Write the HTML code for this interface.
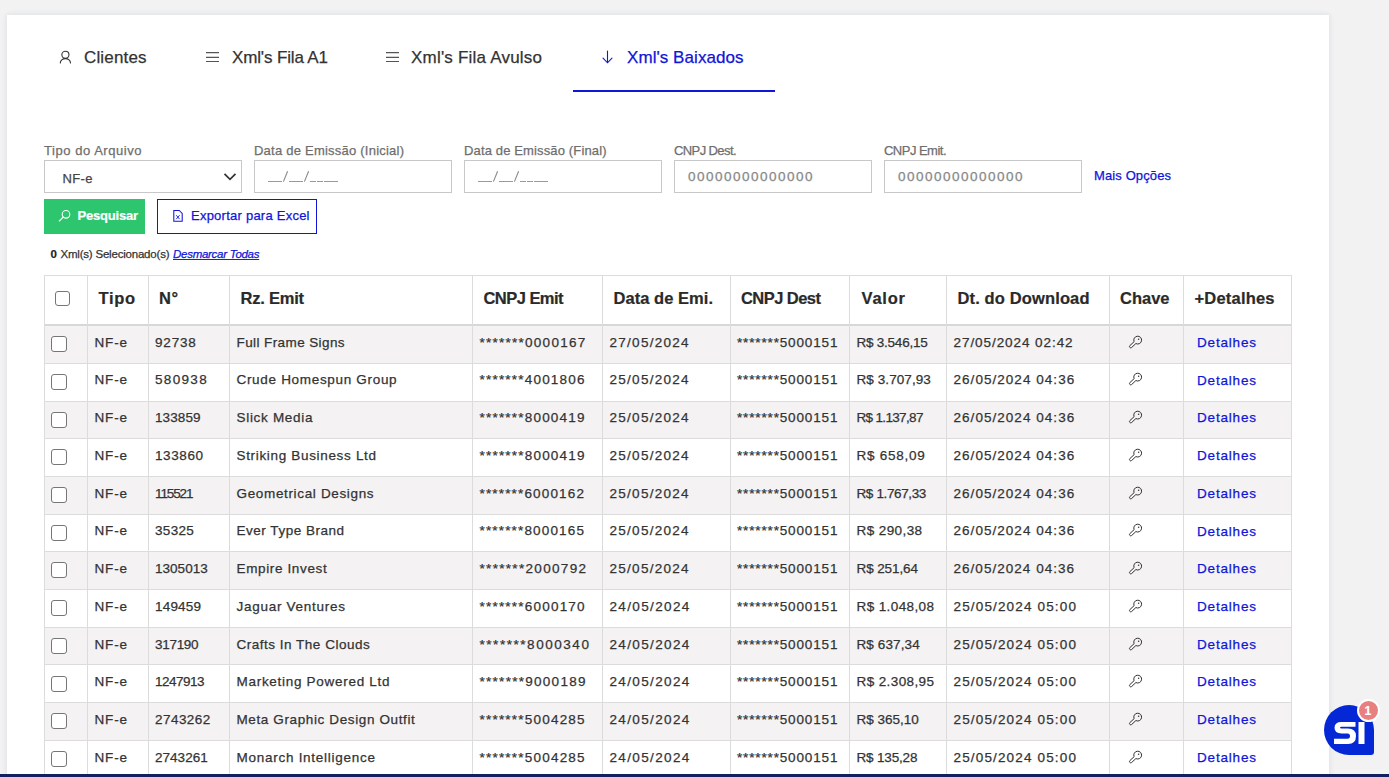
<!DOCTYPE html>
<html><head><meta charset="utf-8">
<style>
*{margin:0;padding:0;box-sizing:border-box}
html,body{width:1389px;height:777px;overflow:hidden;background:#f2f2f3;font-family:"Liberation Sans",sans-serif;color:#333}
.t,.a{position:absolute;white-space:nowrap}
.t{-webkit-text-stroke:0.25px currentColor}
.b{-webkit-text-stroke:0.2px currentColor}
</style></head><body>

<div class="a" style="left:7px;top:15px;width:1322px;height:770px;background:#fff;box-shadow:0 0 6px rgba(40,50,70,.11)"></div>
<svg class="a" style="left:59px;top:50px" width="14" height="14" viewBox="0 0 14 14"><circle cx="6.4" cy="4.8" r="3.55" fill="none" stroke="#333" stroke-width="1.1"/><path d="M1.3 13 A5.1 4.4 0 0 1 11.5 13" fill="none" stroke="#333" stroke-width="1.1" stroke-linecap="round"/></svg>
<div class="t" style="left:84.00px;top:48.33px;font-size:17.00px;line-height:19.55px;color:#333;letter-spacing:0.154px">Clientes</div>
<svg class="a" style="left:206px;top:50px" width="14" height="14" viewBox="0 0 14 14"><path d="M0 2.6H13M0 7.4H13M0 11.5H13" stroke="#555" stroke-width="1.1"/></svg>
<svg class="a" style="left:386px;top:50px" width="14" height="14" viewBox="0 0 14 14"><path d="M0 2.6H13M0 7.4H13M0 11.5H13" stroke="#555" stroke-width="1.1"/></svg>
<div class="t" style="left:232.00px;top:48.33px;font-size:17.00px;line-height:19.55px;color:#333;letter-spacing:-0.143px">Xml&#x27;s Fila A1</div>
<div class="t" style="left:411.00px;top:48.33px;font-size:17.00px;line-height:19.55px;color:#333;letter-spacing:0.210px">Xml&#x27;s Fila Avulso</div>
<svg class="a" style="left:600px;top:50px" width="15" height="14" viewBox="0 0 15 14"><path d="M7.5 1V12.8M3 8.2L7.5 12.8L12 8.2" fill="none" stroke="#1015d8" stroke-width="1.1" stroke-linecap="round"/></svg>
<div class="t" style="left:627.00px;top:48.33px;font-size:17.00px;line-height:19.55px;color:#1015d8;letter-spacing:0.063px">Xml&#x27;s Baixados</div>
<div class="a" style="left:573px;top:90px;width:202px;height:2px;background:#1015d8"></div>
<div class="t" style="left:44.00px;top:143.82px;font-size:13.00px;line-height:14.95px;color:#6e6e6e;letter-spacing:0.546px">Tipo do Arquivo</div>
<div class="t" style="left:254.00px;top:143.82px;font-size:13.00px;line-height:14.95px;color:#6e6e6e;letter-spacing:0.229px">Data de Emissão (Inicial)</div>
<div class="t" style="left:464.00px;top:143.82px;font-size:13.00px;line-height:14.95px;color:#6e6e6e;letter-spacing:0.139px">Data de Emissão (Final)</div>
<div class="t" style="left:674.00px;top:143.82px;font-size:13.00px;line-height:14.95px;color:#6e6e6e;letter-spacing:-0.600px">CNPJ Dest.</div>
<div class="t" style="left:884.00px;top:143.82px;font-size:13.00px;line-height:14.95px;color:#6e6e6e;letter-spacing:-0.519px">CNPJ Emit.</div>
<div class="a" style="left:44px;top:160px;width:198px;height:33px;border:1px solid #c8c8c8;background:#fff"></div>
<div class="a" style="left:254px;top:160px;width:198px;height:33px;border:1px solid #c8c8c8;background:#fff"></div>
<div class="a" style="left:464px;top:160px;width:198px;height:33px;border:1px solid #c8c8c8;background:#fff"></div>
<div class="a" style="left:674px;top:160px;width:198px;height:33px;border:1px solid #c8c8c8;background:#fff"></div>
<div class="a" style="left:884px;top:160px;width:198px;height:33px;border:1px solid #c8c8c8;background:#fff"></div>
<div class="t" style="left:62.50px;top:172.02px;font-size:13.00px;line-height:14.95px;color:#444;letter-spacing:0.370px">NF-e</div>
<svg class="a" style="left:223px;top:172px" width="14" height="10" viewBox="0 0 14 10"><path d="M1.5 1.8L7 7.3L12.5 1.8" fill="none" stroke="#333" stroke-width="1.7"/></svg>
<div class="a" style="left:268.1px;top:181px;width:6.6px;height:1.1px;background:#9a9a9a"></div>
<div class="a" style="left:275.2px;top:181px;width:6.6px;height:1.1px;background:#9a9a9a"></div>
<div class="a" style="left:289.0px;top:181px;width:6.6px;height:1.1px;background:#9a9a9a"></div>
<div class="a" style="left:296.2px;top:181px;width:6.6px;height:1.1px;background:#9a9a9a"></div>
<div class="a" style="left:309.5px;top:181px;width:6.6px;height:1.1px;background:#9a9a9a"></div>
<div class="a" style="left:316.8px;top:181px;width:6.6px;height:1.1px;background:#9a9a9a"></div>
<div class="a" style="left:324.1px;top:181px;width:6.6px;height:1.1px;background:#9a9a9a"></div>
<div class="a" style="left:331.4px;top:181px;width:6.6px;height:1.1px;background:#9a9a9a"></div>
<svg class="a" style="left:254px;top:170px" width="60" height="13" viewBox="0 0 60 13"><path d="M33.6 1.2L29.4 11.6M54.6 1.2L50.4 11.6" stroke="#8a8a8a" stroke-width="1.1"/></svg>
<div class="a" style="left:478.1px;top:181px;width:6.6px;height:1.1px;background:#9a9a9a"></div>
<div class="a" style="left:485.2px;top:181px;width:6.6px;height:1.1px;background:#9a9a9a"></div>
<div class="a" style="left:499.0px;top:181px;width:6.6px;height:1.1px;background:#9a9a9a"></div>
<div class="a" style="left:506.2px;top:181px;width:6.6px;height:1.1px;background:#9a9a9a"></div>
<div class="a" style="left:519.5px;top:181px;width:6.6px;height:1.1px;background:#9a9a9a"></div>
<div class="a" style="left:526.8px;top:181px;width:6.6px;height:1.1px;background:#9a9a9a"></div>
<div class="a" style="left:534.1px;top:181px;width:6.6px;height:1.1px;background:#9a9a9a"></div>
<div class="a" style="left:541.4px;top:181px;width:6.6px;height:1.1px;background:#9a9a9a"></div>
<svg class="a" style="left:464px;top:170px" width="60" height="13" viewBox="0 0 60 13"><path d="M33.6 1.2L29.4 11.6M54.6 1.2L50.4 11.6" stroke="#8a8a8a" stroke-width="1.1"/></svg>
<div class="t" style="left:688.00px;top:169.36px;font-size:13.50px;line-height:15.52px;color:#888;letter-spacing:1.491px">00000000000000</div>
<div class="t" style="left:898.00px;top:169.36px;font-size:13.50px;line-height:15.52px;color:#888;letter-spacing:1.491px">00000000000000</div>
<div class="t" style="left:1094.00px;top:168.62px;font-size:13.00px;line-height:14.95px;color:#1015d8;letter-spacing:0.114px">Mais Opções</div>
<div class="a" style="left:44px;top:199px;width:101px;height:35px;background:#2dc56d"></div>
<svg class="a" style="left:58px;top:209px" width="14" height="14" viewBox="0 0 14 14"><circle cx="8" cy="5.3" r="3.8" fill="none" stroke="#fff" stroke-width="1.1"/><path d="M5.3 8L1.3 12" stroke="#fff" stroke-width="1.1" stroke-linecap="round"/></svg>
<div class="t b" style="left:77.50px;top:209.22px;font-size:13.00px;line-height:14.95px;color:#fff;font-weight:bold;letter-spacing:-0.206px">Pesquisar</div>
<div class="a" style="left:157px;top:199px;width:160px;height:35px;border:1.5px solid #1015d8"></div>
<svg class="a" style="left:172px;top:209px" width="12" height="14" viewBox="0 0 12 14"><path d="M1.8 1.5H7.2L10.2 4.5V12.3H1.8Z" fill="none" stroke="#1015d8" stroke-width="1.05"/><path d="M4.2 6.2L7.6 10.2M7.6 6.2L4.2 10.2" stroke="#1015d8" stroke-width="0.9"/></svg>
<div class="t" style="left:191.00px;top:209.42px;font-size:13.00px;line-height:14.95px;color:#1015d8;letter-spacing:0.241px">Exportar para Excel</div>
<div class="t b" style="left:50.50px;top:247.80px;font-size:11.50px;line-height:13.22px;color:#222;font-weight:bold">0</div>
<div class="t" style="left:60.50px;top:247.80px;font-size:11.50px;line-height:13.22px;color:#333;letter-spacing:-0.206px">Xml(s) Selecionado(s)</div>
<div class="t" style="left:173.00px;top:247.80px;font-size:11.50px;line-height:13.22px;color:#1015d8;font-style:italic;letter-spacing:-0.274px;text-decoration:underline;text-decoration-color:#333">Desmarcar Todas</div>
<div class="a" style="left:44px;top:326px;width:1248px;height:37px;background:#f4f2f3"></div>
<div class="a" style="left:44px;top:401px;width:1248px;height:37px;background:#f4f2f3"></div>
<div class="a" style="left:44px;top:476px;width:1248px;height:38px;background:#f4f2f3"></div>
<div class="a" style="left:44px;top:551px;width:1248px;height:38px;background:#f4f2f3"></div>
<div class="a" style="left:44px;top:627px;width:1248px;height:37px;background:#f4f2f3"></div>
<div class="a" style="left:44px;top:702px;width:1248px;height:38px;background:#f4f2f3"></div>
<div class="a" style="left:44px;top:275px;width:1248px;height:1px;background:#dcdcdc"></div>
<div class="a" style="left:44px;top:324px;width:1248px;height:2px;background:#d8d8d8"></div>
<div class="a" style="left:44px;top:363px;width:1248px;height:1px;background:#dcdcdc"></div>
<div class="a" style="left:44px;top:401px;width:1248px;height:1px;background:#dcdcdc"></div>
<div class="a" style="left:44px;top:438px;width:1248px;height:1px;background:#dcdcdc"></div>
<div class="a" style="left:44px;top:476px;width:1248px;height:1px;background:#dcdcdc"></div>
<div class="a" style="left:44px;top:514px;width:1248px;height:1px;background:#dcdcdc"></div>
<div class="a" style="left:44px;top:551px;width:1248px;height:1px;background:#dcdcdc"></div>
<div class="a" style="left:44px;top:589px;width:1248px;height:1px;background:#dcdcdc"></div>
<div class="a" style="left:44px;top:627px;width:1248px;height:1px;background:#dcdcdc"></div>
<div class="a" style="left:44px;top:664px;width:1248px;height:1px;background:#dcdcdc"></div>
<div class="a" style="left:44px;top:702px;width:1248px;height:1px;background:#dcdcdc"></div>
<div class="a" style="left:44px;top:740px;width:1248px;height:1px;background:#dcdcdc"></div>
<div class="a" style="left:44px;top:777px;width:1248px;height:1px;background:#dcdcdc"></div>
<div class="a" style="left:44px;top:275px;width:1px;height:502px;background:#dcdcdc"></div>
<div class="a" style="left:87px;top:275px;width:1px;height:502px;background:#dcdcdc"></div>
<div class="a" style="left:148px;top:275px;width:1px;height:502px;background:#dcdcdc"></div>
<div class="a" style="left:229px;top:275px;width:1px;height:502px;background:#dcdcdc"></div>
<div class="a" style="left:472px;top:275px;width:1px;height:502px;background:#dcdcdc"></div>
<div class="a" style="left:602px;top:275px;width:1px;height:502px;background:#dcdcdc"></div>
<div class="a" style="left:730px;top:275px;width:1px;height:502px;background:#dcdcdc"></div>
<div class="a" style="left:849px;top:275px;width:1px;height:502px;background:#dcdcdc"></div>
<div class="a" style="left:946px;top:275px;width:1px;height:502px;background:#dcdcdc"></div>
<div class="a" style="left:1109px;top:275px;width:1px;height:502px;background:#dcdcdc"></div>
<div class="a" style="left:1183px;top:275px;width:1px;height:502px;background:#dcdcdc"></div>
<div class="a" style="left:1291px;top:275px;width:1px;height:502px;background:#dcdcdc"></div>
<div class="a" style="left:55px;top:291px;width:15px;height:15px;border:1.5px solid #767676;border-radius:3px;background:#fff"></div>
<div class="t b" style="left:98.50px;top:288.89px;font-size:16.50px;line-height:18.97px;color:#2a2a2a;font-weight:bold;letter-spacing:0.659px">Tipo</div>
<div class="t b" style="left:159.00px;top:288.89px;font-size:16.50px;line-height:18.97px;color:#2a2a2a;font-weight:bold;letter-spacing:0.485px">N°</div>
<div class="t b" style="left:240.50px;top:288.89px;font-size:16.50px;line-height:18.97px;color:#2a2a2a;font-weight:bold;letter-spacing:-0.227px">Rz. Emit</div>
<div class="t b" style="left:483.50px;top:288.89px;font-size:16.50px;line-height:18.97px;color:#2a2a2a;font-weight:bold;letter-spacing:-0.544px">CNPJ Emit</div>
<div class="t b" style="left:613.50px;top:288.89px;font-size:16.50px;line-height:18.97px;color:#2a2a2a;font-weight:bold;letter-spacing:0.042px">Data de Emi.</div>
<div class="t b" style="left:741.00px;top:288.89px;font-size:16.50px;line-height:18.97px;color:#2a2a2a;font-weight:bold;letter-spacing:-0.545px">CNPJ Dest</div>
<div class="t b" style="left:861.50px;top:288.89px;font-size:16.50px;line-height:18.97px;color:#2a2a2a;font-weight:bold;letter-spacing:0.786px">Valor</div>
<div class="t b" style="left:957.50px;top:288.89px;font-size:16.50px;line-height:18.97px;color:#2a2a2a;font-weight:bold;letter-spacing:0.132px">Dt. do Download</div>
<div class="t b" style="left:1120.00px;top:288.89px;font-size:16.50px;line-height:18.97px;color:#2a2a2a;font-weight:bold">Chave</div>
<div class="t b" style="left:1194.50px;top:288.89px;font-size:16.50px;line-height:18.97px;color:#2a2a2a;font-weight:bold;letter-spacing:0.198px">+Detalhes</div>
<div class="a" style="left:51px;top:336.0px;width:16px;height:16px;border:1.5px solid #767676;border-radius:3px;background:#fff"></div>
<div class="t" style="left:94.50px;top:334.76px;font-size:13.50px;line-height:15.52px;color:#333;letter-spacing:0.833px">NF-e</div>
<div class="t" style="left:155.00px;top:334.76px;font-size:13.50px;line-height:15.52px;color:#333;letter-spacing:0.815px">92738</div>
<div class="t" style="left:236.50px;top:334.76px;font-size:13.50px;line-height:15.52px;color:#333;letter-spacing:0.405px">Full Frame Signs</div>
<div class="t" style="left:479.50px;top:334.76px;font-size:13.50px;line-height:15.52px;color:#333;letter-spacing:1.259px">*******0000167</div>
<div class="t" style="left:609.50px;top:334.76px;font-size:13.50px;line-height:15.52px;color:#333;letter-spacing:1.281px">27/05/2024</div>
<div class="t" style="left:737.00px;top:334.76px;font-size:13.50px;line-height:15.52px;color:#333;letter-spacing:0.851px">*******5000151</div>
<div class="t" style="left:856.50px;top:334.76px;font-size:13.50px;line-height:15.52px;color:#333;letter-spacing:-0.236px">R$ 3.546,15</div>
<div class="t" style="left:953.50px;top:334.76px;font-size:13.50px;line-height:15.52px;color:#333;letter-spacing:0.933px">27/05/2024 02:42</div>
<svg class="a" style="left:1128px;top:334.7px" width="16" height="16" viewBox="0 0 16 16"><path d="M6.12 6.65A3.9 3.9 0 1 1 7.88 8.55L3.58 12.55A1.3 1.3 0 0 1 1.82 10.65Z" fill="none" stroke="#333" stroke-width="1"/><circle cx="10.6" cy="4.3" r="0.75" fill="#333"/></svg>
<div class="t" style="left:1197.00px;top:334.86px;font-size:13.50px;line-height:15.52px;color:#1015d8;letter-spacing:0.817px">Detalhes</div>
<div class="a" style="left:51px;top:373.7px;width:16px;height:16px;border:1.5px solid #767676;border-radius:3px;background:#fff"></div>
<div class="t" style="left:94.50px;top:372.49px;font-size:13.50px;line-height:15.52px;color:#333;letter-spacing:0.833px">NF-e</div>
<div class="t" style="left:155.00px;top:372.49px;font-size:13.50px;line-height:15.52px;color:#333;letter-spacing:1.330px">580938</div>
<div class="t" style="left:236.50px;top:372.49px;font-size:13.50px;line-height:15.52px;color:#333;letter-spacing:0.685px">Crude Homespun Group</div>
<div class="t" style="left:479.50px;top:372.49px;font-size:13.50px;line-height:15.52px;color:#333;letter-spacing:1.205px">*******4001806</div>
<div class="t" style="left:609.50px;top:372.49px;font-size:13.50px;line-height:15.52px;color:#333;letter-spacing:1.281px">25/05/2024</div>
<div class="t" style="left:737.00px;top:372.49px;font-size:13.50px;line-height:15.52px;color:#333;letter-spacing:0.851px">*******5000151</div>
<div class="t" style="left:856.50px;top:372.49px;font-size:13.50px;line-height:15.52px;color:#333;letter-spacing:0.074px">R$ 3.707,93</div>
<div class="t" style="left:953.50px;top:372.49px;font-size:13.50px;line-height:15.52px;color:#333;letter-spacing:1.040px">26/05/2024 04:36</div>
<svg class="a" style="left:1128px;top:372.4px" width="16" height="16" viewBox="0 0 16 16"><path d="M6.12 6.65A3.9 3.9 0 1 1 7.88 8.55L3.58 12.55A1.3 1.3 0 0 1 1.82 10.65Z" fill="none" stroke="#333" stroke-width="1"/><circle cx="10.6" cy="4.3" r="0.75" fill="#333"/></svg>
<div class="t" style="left:1197.00px;top:372.59px;font-size:13.50px;line-height:15.52px;color:#1015d8;letter-spacing:0.817px">Detalhes</div>
<div class="a" style="left:51px;top:411.5px;width:16px;height:16px;border:1.5px solid #767676;border-radius:3px;background:#fff"></div>
<div class="t" style="left:94.50px;top:410.22px;font-size:13.50px;line-height:15.52px;color:#333;letter-spacing:0.833px">NF-e</div>
<div class="t" style="left:155.00px;top:410.22px;font-size:13.50px;line-height:15.52px;color:#333;letter-spacing:0.110px">133859</div>
<div class="t" style="left:236.50px;top:410.22px;font-size:13.50px;line-height:15.52px;color:#333;letter-spacing:0.687px">Slick Media</div>
<div class="t" style="left:479.50px;top:410.22px;font-size:13.50px;line-height:15.52px;color:#333;letter-spacing:1.205px">*******8000419</div>
<div class="t" style="left:609.50px;top:410.22px;font-size:13.50px;line-height:15.52px;color:#333;letter-spacing:1.281px">25/05/2024</div>
<div class="t" style="left:737.00px;top:410.22px;font-size:13.50px;line-height:15.52px;color:#333;letter-spacing:0.851px">*******5000151</div>
<div class="t" style="left:856.50px;top:410.22px;font-size:13.50px;line-height:15.52px;color:#333;letter-spacing:-0.666px">R$ 1.137,87</div>
<div class="t" style="left:953.50px;top:410.22px;font-size:13.50px;line-height:15.52px;color:#333;letter-spacing:1.040px">26/05/2024 04:36</div>
<svg class="a" style="left:1128px;top:410.2px" width="16" height="16" viewBox="0 0 16 16"><path d="M6.12 6.65A3.9 3.9 0 1 1 7.88 8.55L3.58 12.55A1.3 1.3 0 0 1 1.82 10.65Z" fill="none" stroke="#333" stroke-width="1"/><circle cx="10.6" cy="4.3" r="0.75" fill="#333"/></svg>
<div class="t" style="left:1197.00px;top:410.32px;font-size:13.50px;line-height:15.52px;color:#1015d8;letter-spacing:0.817px">Detalhes</div>
<div class="a" style="left:51px;top:449.2px;width:16px;height:16px;border:1.5px solid #767676;border-radius:3px;background:#fff"></div>
<div class="t" style="left:94.50px;top:447.95px;font-size:13.50px;line-height:15.52px;color:#333;letter-spacing:0.833px">NF-e</div>
<div class="t" style="left:155.00px;top:447.95px;font-size:13.50px;line-height:15.52px;color:#333;letter-spacing:0.590px">133860</div>
<div class="t" style="left:236.50px;top:447.95px;font-size:13.50px;line-height:15.52px;color:#333;letter-spacing:0.672px">Striking Business Ltd</div>
<div class="t" style="left:479.50px;top:447.95px;font-size:13.50px;line-height:15.52px;color:#333;letter-spacing:1.205px">*******8000419</div>
<div class="t" style="left:609.50px;top:447.95px;font-size:13.50px;line-height:15.52px;color:#333;letter-spacing:1.281px">25/05/2024</div>
<div class="t" style="left:737.00px;top:447.95px;font-size:13.50px;line-height:15.52px;color:#333;letter-spacing:0.851px">*******5000151</div>
<div class="t" style="left:856.50px;top:447.95px;font-size:13.50px;line-height:15.52px;color:#333;letter-spacing:0.737px">R$ 658,09</div>
<div class="t" style="left:953.50px;top:447.95px;font-size:13.50px;line-height:15.52px;color:#333;letter-spacing:1.040px">26/05/2024 04:36</div>
<svg class="a" style="left:1128px;top:447.9px" width="16" height="16" viewBox="0 0 16 16"><path d="M6.12 6.65A3.9 3.9 0 1 1 7.88 8.55L3.58 12.55A1.3 1.3 0 0 1 1.82 10.65Z" fill="none" stroke="#333" stroke-width="1"/><circle cx="10.6" cy="4.3" r="0.75" fill="#333"/></svg>
<div class="t" style="left:1197.00px;top:448.05px;font-size:13.50px;line-height:15.52px;color:#1015d8;letter-spacing:0.817px">Detalhes</div>
<div class="a" style="left:51px;top:486.9px;width:16px;height:16px;border:1.5px solid #767676;border-radius:3px;background:#fff"></div>
<div class="t" style="left:94.50px;top:485.68px;font-size:13.50px;line-height:15.52px;color:#333;letter-spacing:0.833px">NF-e</div>
<div class="t" style="left:155.00px;top:485.68px;font-size:13.50px;line-height:15.52px;color:#333;letter-spacing:-1.130px">115521</div>
<div class="t" style="left:236.50px;top:485.68px;font-size:13.50px;line-height:15.52px;color:#333;letter-spacing:0.656px">Geometrical Designs</div>
<div class="t" style="left:479.50px;top:485.68px;font-size:13.50px;line-height:15.52px;color:#333;letter-spacing:1.159px">*******6000162</div>
<div class="t" style="left:609.50px;top:485.68px;font-size:13.50px;line-height:15.52px;color:#333;letter-spacing:1.281px">25/05/2024</div>
<div class="t" style="left:737.00px;top:485.68px;font-size:13.50px;line-height:15.52px;color:#333;letter-spacing:0.851px">*******5000151</div>
<div class="t" style="left:856.50px;top:485.68px;font-size:13.50px;line-height:15.52px;color:#333;letter-spacing:-0.376px">R$ 1.767,33</div>
<div class="t" style="left:953.50px;top:485.68px;font-size:13.50px;line-height:15.52px;color:#333;letter-spacing:1.040px">26/05/2024 04:36</div>
<svg class="a" style="left:1128px;top:485.6px" width="16" height="16" viewBox="0 0 16 16"><path d="M6.12 6.65A3.9 3.9 0 1 1 7.88 8.55L3.58 12.55A1.3 1.3 0 0 1 1.82 10.65Z" fill="none" stroke="#333" stroke-width="1"/><circle cx="10.6" cy="4.3" r="0.75" fill="#333"/></svg>
<div class="t" style="left:1197.00px;top:485.78px;font-size:13.50px;line-height:15.52px;color:#1015d8;letter-spacing:0.817px">Detalhes</div>
<div class="a" style="left:51px;top:524.6px;width:16px;height:16px;border:1.5px solid #767676;border-radius:3px;background:#fff"></div>
<div class="t" style="left:94.50px;top:523.41px;font-size:13.50px;line-height:15.52px;color:#333;letter-spacing:0.833px">NF-e</div>
<div class="t" style="left:155.00px;top:523.41px;font-size:13.50px;line-height:15.52px;color:#333;letter-spacing:0.315px">35325</div>
<div class="t" style="left:236.50px;top:523.41px;font-size:13.50px;line-height:15.52px;color:#333;letter-spacing:0.521px">Ever Type Brand</div>
<div class="t" style="left:479.50px;top:523.41px;font-size:13.50px;line-height:15.52px;color:#333;letter-spacing:1.159px">*******8000165</div>
<div class="t" style="left:609.50px;top:523.41px;font-size:13.50px;line-height:15.52px;color:#333;letter-spacing:1.281px">25/05/2024</div>
<div class="t" style="left:737.00px;top:523.41px;font-size:13.50px;line-height:15.52px;color:#333;letter-spacing:0.851px">*******5000151</div>
<div class="t" style="left:856.50px;top:523.41px;font-size:13.50px;line-height:15.52px;color:#333;letter-spacing:0.412px">R$ 290,38</div>
<div class="t" style="left:953.50px;top:523.41px;font-size:13.50px;line-height:15.52px;color:#333;letter-spacing:1.040px">26/05/2024 04:36</div>
<svg class="a" style="left:1128px;top:523.4px" width="16" height="16" viewBox="0 0 16 16"><path d="M6.12 6.65A3.9 3.9 0 1 1 7.88 8.55L3.58 12.55A1.3 1.3 0 0 1 1.82 10.65Z" fill="none" stroke="#333" stroke-width="1"/><circle cx="10.6" cy="4.3" r="0.75" fill="#333"/></svg>
<div class="t" style="left:1197.00px;top:523.51px;font-size:13.50px;line-height:15.52px;color:#1015d8;letter-spacing:0.817px">Detalhes</div>
<div class="a" style="left:51px;top:562.4px;width:16px;height:16px;border:1.5px solid #767676;border-radius:3px;background:#fff"></div>
<div class="t" style="left:94.50px;top:561.14px;font-size:13.50px;line-height:15.52px;color:#333;letter-spacing:0.833px">NF-e</div>
<div class="t" style="left:155.00px;top:561.14px;font-size:13.50px;line-height:15.52px;color:#333;letter-spacing:0.024px">1305013</div>
<div class="t" style="left:236.50px;top:561.14px;font-size:13.50px;line-height:15.52px;color:#333;letter-spacing:0.639px">Empire Invest</div>
<div class="t" style="left:479.50px;top:561.14px;font-size:13.50px;line-height:15.52px;color:#333;letter-spacing:1.321px">*******2000792</div>
<div class="t" style="left:609.50px;top:561.14px;font-size:13.50px;line-height:15.52px;color:#333;letter-spacing:1.281px">25/05/2024</div>
<div class="t" style="left:737.00px;top:561.14px;font-size:13.50px;line-height:15.52px;color:#333;letter-spacing:0.851px">*******5000151</div>
<div class="t" style="left:856.50px;top:561.14px;font-size:13.50px;line-height:15.52px;color:#333;letter-spacing:-0.100px">R$ 251,64</div>
<div class="t" style="left:953.50px;top:561.14px;font-size:13.50px;line-height:15.52px;color:#333;letter-spacing:1.033px">26/05/2024 04:36</div>
<svg class="a" style="left:1128px;top:561.1px" width="16" height="16" viewBox="0 0 16 16"><path d="M6.12 6.65A3.9 3.9 0 1 1 7.88 8.55L3.58 12.55A1.3 1.3 0 0 1 1.82 10.65Z" fill="none" stroke="#333" stroke-width="1"/><circle cx="10.6" cy="4.3" r="0.75" fill="#333"/></svg>
<div class="t" style="left:1197.00px;top:561.24px;font-size:13.50px;line-height:15.52px;color:#1015d8;letter-spacing:0.817px">Detalhes</div>
<div class="a" style="left:51px;top:600.1px;width:16px;height:16px;border:1.5px solid #767676;border-radius:3px;background:#fff"></div>
<div class="t" style="left:94.50px;top:598.87px;font-size:13.50px;line-height:15.52px;color:#333;letter-spacing:0.833px">NF-e</div>
<div class="t" style="left:155.00px;top:598.87px;font-size:13.50px;line-height:15.52px;color:#333;letter-spacing:0.190px">149459</div>
<div class="t" style="left:236.50px;top:598.87px;font-size:13.50px;line-height:15.52px;color:#333;letter-spacing:0.727px">Jaguar Ventures</div>
<div class="t" style="left:479.50px;top:598.87px;font-size:13.50px;line-height:15.52px;color:#333;letter-spacing:1.213px">*******6000170</div>
<div class="t" style="left:609.50px;top:598.87px;font-size:13.50px;line-height:15.52px;color:#333;letter-spacing:1.359px">24/05/2024</div>
<div class="t" style="left:737.00px;top:598.87px;font-size:13.50px;line-height:15.52px;color:#333;letter-spacing:0.851px">*******5000151</div>
<div class="t" style="left:856.50px;top:598.87px;font-size:13.50px;line-height:15.52px;color:#333;letter-spacing:0.394px">R$ 1.048,08</div>
<div class="t" style="left:953.50px;top:598.87px;font-size:13.50px;line-height:15.52px;color:#333;letter-spacing:1.153px">25/05/2024 05:00</div>
<svg class="a" style="left:1128px;top:598.8px" width="16" height="16" viewBox="0 0 16 16"><path d="M6.12 6.65A3.9 3.9 0 1 1 7.88 8.55L3.58 12.55A1.3 1.3 0 0 1 1.82 10.65Z" fill="none" stroke="#333" stroke-width="1"/><circle cx="10.6" cy="4.3" r="0.75" fill="#333"/></svg>
<div class="t" style="left:1197.00px;top:598.97px;font-size:13.50px;line-height:15.52px;color:#1015d8;letter-spacing:0.817px">Detalhes</div>
<div class="a" style="left:51px;top:637.8px;width:16px;height:16px;border:1.5px solid #767676;border-radius:3px;background:#fff"></div>
<div class="t" style="left:94.50px;top:636.60px;font-size:13.50px;line-height:15.52px;color:#333;letter-spacing:0.833px">NF-e</div>
<div class="t" style="left:155.00px;top:636.60px;font-size:13.50px;line-height:15.52px;color:#333;letter-spacing:-0.290px">317190</div>
<div class="t" style="left:236.50px;top:636.60px;font-size:13.50px;line-height:15.52px;color:#333;letter-spacing:0.507px">Crafts In The Clouds</div>
<div class="t" style="left:479.50px;top:636.60px;font-size:13.50px;line-height:15.52px;color:#333;letter-spacing:1.544px">*******8000340</div>
<div class="t" style="left:609.50px;top:636.60px;font-size:13.50px;line-height:15.52px;color:#333;letter-spacing:1.359px">24/05/2024</div>
<div class="t" style="left:737.00px;top:636.60px;font-size:13.50px;line-height:15.52px;color:#333;letter-spacing:0.851px">*******5000151</div>
<div class="t" style="left:856.50px;top:636.60px;font-size:13.50px;line-height:15.52px;color:#333;letter-spacing:0.112px">R$ 637,34</div>
<div class="t" style="left:953.50px;top:636.60px;font-size:13.50px;line-height:15.52px;color:#333;letter-spacing:1.153px">25/05/2024 05:00</div>
<svg class="a" style="left:1128px;top:636.5px" width="16" height="16" viewBox="0 0 16 16"><path d="M6.12 6.65A3.9 3.9 0 1 1 7.88 8.55L3.58 12.55A1.3 1.3 0 0 1 1.82 10.65Z" fill="none" stroke="#333" stroke-width="1"/><circle cx="10.6" cy="4.3" r="0.75" fill="#333"/></svg>
<div class="t" style="left:1197.00px;top:636.70px;font-size:13.50px;line-height:15.52px;color:#1015d8;letter-spacing:0.817px">Detalhes</div>
<div class="a" style="left:51px;top:675.6px;width:16px;height:16px;border:1.5px solid #767676;border-radius:3px;background:#fff"></div>
<div class="t" style="left:94.50px;top:674.33px;font-size:13.50px;line-height:15.52px;color:#333;letter-spacing:0.833px">NF-e</div>
<div class="t" style="left:155.00px;top:674.33px;font-size:13.50px;line-height:15.52px;color:#333;letter-spacing:-0.510px">1247913</div>
<div class="t" style="left:236.50px;top:674.33px;font-size:13.50px;line-height:15.52px;color:#333;letter-spacing:0.709px">Marketing Powered Ltd</div>
<div class="t" style="left:479.50px;top:674.33px;font-size:13.50px;line-height:15.52px;color:#333;letter-spacing:1.282px">*******9000189</div>
<div class="t" style="left:609.50px;top:674.33px;font-size:13.50px;line-height:15.52px;color:#333;letter-spacing:1.359px">24/05/2024</div>
<div class="t" style="left:737.00px;top:674.33px;font-size:13.50px;line-height:15.52px;color:#333;letter-spacing:0.851px">*******5000151</div>
<div class="t" style="left:856.50px;top:674.33px;font-size:13.50px;line-height:15.52px;color:#333;letter-spacing:0.394px">R$ 2.308,95</div>
<div class="t" style="left:953.50px;top:674.33px;font-size:13.50px;line-height:15.52px;color:#333;letter-spacing:1.153px">25/05/2024 05:00</div>
<svg class="a" style="left:1128px;top:674.3px" width="16" height="16" viewBox="0 0 16 16"><path d="M6.12 6.65A3.9 3.9 0 1 1 7.88 8.55L3.58 12.55A1.3 1.3 0 0 1 1.82 10.65Z" fill="none" stroke="#333" stroke-width="1"/><circle cx="10.6" cy="4.3" r="0.75" fill="#333"/></svg>
<div class="t" style="left:1197.00px;top:674.43px;font-size:13.50px;line-height:15.52px;color:#1015d8;letter-spacing:0.817px">Detalhes</div>
<div class="a" style="left:51px;top:713.3px;width:16px;height:16px;border:1.5px solid #767676;border-radius:3px;background:#fff"></div>
<div class="t" style="left:94.50px;top:712.06px;font-size:13.50px;line-height:15.52px;color:#333;letter-spacing:0.833px">NF-e</div>
<div class="t" style="left:155.00px;top:712.06px;font-size:13.50px;line-height:15.52px;color:#333;letter-spacing:0.457px">2743262</div>
<div class="t" style="left:236.50px;top:712.06px;font-size:13.50px;line-height:15.52px;color:#333;letter-spacing:0.619px">Meta Graphic Design Outfit</div>
<div class="t" style="left:479.50px;top:712.06px;font-size:13.50px;line-height:15.52px;color:#333;letter-spacing:1.213px">*******5004285</div>
<div class="t" style="left:609.50px;top:712.06px;font-size:13.50px;line-height:15.52px;color:#333;letter-spacing:1.359px">24/05/2024</div>
<div class="t" style="left:737.00px;top:712.06px;font-size:13.50px;line-height:15.52px;color:#333;letter-spacing:0.851px">*******5000151</div>
<div class="t" style="left:856.50px;top:712.06px;font-size:13.50px;line-height:15.52px;color:#333">R$ 365,10</div>
<div class="t" style="left:953.50px;top:712.06px;font-size:13.50px;line-height:15.52px;color:#333;letter-spacing:1.153px">25/05/2024 05:00</div>
<svg class="a" style="left:1128px;top:712.0px" width="16" height="16" viewBox="0 0 16 16"><path d="M6.12 6.65A3.9 3.9 0 1 1 7.88 8.55L3.58 12.55A1.3 1.3 0 0 1 1.82 10.65Z" fill="none" stroke="#333" stroke-width="1"/><circle cx="10.6" cy="4.3" r="0.75" fill="#333"/></svg>
<div class="t" style="left:1197.00px;top:712.16px;font-size:13.50px;line-height:15.52px;color:#1015d8;letter-spacing:0.817px">Detalhes</div>
<div class="a" style="left:51px;top:751.0px;width:16px;height:16px;border:1.5px solid #767676;border-radius:3px;background:#fff"></div>
<div class="t" style="left:94.50px;top:749.79px;font-size:13.50px;line-height:15.52px;color:#333;letter-spacing:0.833px">NF-e</div>
<div class="t" style="left:155.00px;top:749.79px;font-size:13.50px;line-height:15.52px;color:#333;letter-spacing:0.024px">2743261</div>
<div class="t" style="left:236.50px;top:749.79px;font-size:13.50px;line-height:15.52px;color:#333;letter-spacing:0.733px">Monarch Intelligence</div>
<div class="t" style="left:479.50px;top:749.79px;font-size:13.50px;line-height:15.52px;color:#333;letter-spacing:1.213px">*******5004285</div>
<div class="t" style="left:609.50px;top:749.79px;font-size:13.50px;line-height:15.52px;color:#333;letter-spacing:1.359px">24/05/2024</div>
<div class="t" style="left:737.00px;top:749.79px;font-size:13.50px;line-height:15.52px;color:#333;letter-spacing:0.851px">*******5000151</div>
<div class="t" style="left:856.50px;top:749.79px;font-size:13.50px;line-height:15.52px;color:#333;letter-spacing:-0.175px">R$ 135,28</div>
<div class="t" style="left:953.50px;top:749.79px;font-size:13.50px;line-height:15.52px;color:#333;letter-spacing:1.153px">25/05/2024 05:00</div>
<svg class="a" style="left:1128px;top:749.7px" width="16" height="16" viewBox="0 0 16 16"><path d="M6.12 6.65A3.9 3.9 0 1 1 7.88 8.55L3.58 12.55A1.3 1.3 0 0 1 1.82 10.65Z" fill="none" stroke="#333" stroke-width="1"/><circle cx="10.6" cy="4.3" r="0.75" fill="#333"/></svg>
<div class="t" style="left:1197.00px;top:749.89px;font-size:13.50px;line-height:15.52px;color:#1015d8;letter-spacing:0.817px">Detalhes</div>
<div class="a" style="left:1324px;top:705px;width:50px;height:50px;background:#0428d5;border-radius:25px 25px 3px 25px"></div>
<svg class="a" style="left:1333px;top:721px" width="33" height="24" viewBox="0 0 33 24"><path d="M22.5 1H8.5Q1.5 1 1.5 6.8Q1.5 12.5 8.5 12.5H14.5Q17 12.5 17 15Q17 17.8 14.5 17.8H1V23H15Q23 23 23 15Q23 7.5 15 7.5H8.5Q7 7.5 7 6.5Q7 5.8 8.5 5.8H22.5Z" fill="#fff"/><rect x="25.5" y="1" width="6" height="22" fill="#fff"/></svg>
<div class="a" style="left:1357px;top:699px;width:23px;height:23px;border-radius:50%;background:#e88080;border:2px solid #fff"></div>
<div class="t b" style="left:1364.50px;top:705.44px;font-size:12.00px;line-height:13.80px;color:#fff;font-weight:bold">1</div>
<div class="a" style="left:0;top:774px;width:1389px;height:3px;background:#131f5e"></div>
</body></html>
